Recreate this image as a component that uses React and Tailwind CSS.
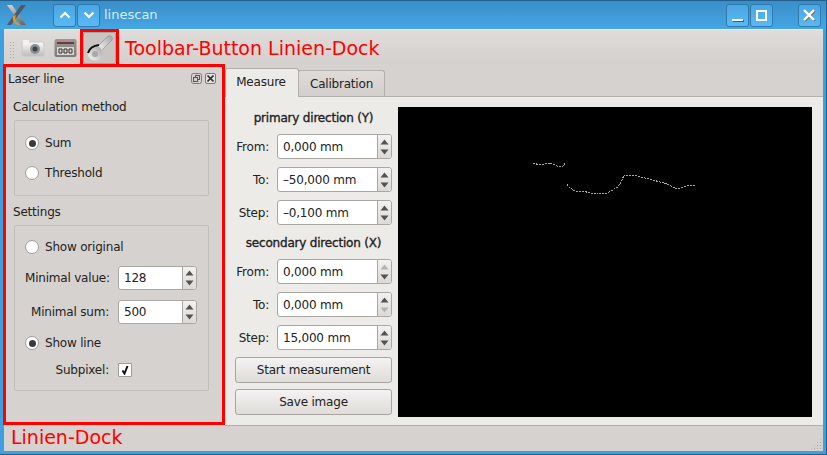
import React from "react";

const Up = ({ dim }) => (
  <svg width="9" height="6" viewBox="0 0 9 6"><path d="M4.5 0.5 L8.5 5.5 H0.5 Z" fill={dim ? "#b5b3b0" : "#55534f"} /></svg>
);
const Down = ({ dim }) => (
  <svg width="9" height="6" viewBox="0 0 9 6"><path d="M4.5 5.5 L8.5 0.5 H0.5 Z" fill={dim ? "#b5b3b0" : "#55534f"} /></svg>
);

function Spin({ value, w = "w-[115px]", h = "h-[25px]", upDim, downDim }) {
  return (
    <div className={`${w} ${h} flex rounded-[3px] border border-[#aaa7a3] bg-white`}>
      <div className="flex-1 pl-[5px] flex items-center text-[12px] text-[#222] whitespace-pre">{value}</div>
      <div className="w-[14px] border-l border-[#aaa7a3] bg-gradient-to-b from-[#f3f2f0] to-[#dcd9d6] rounded-r-[3px] flex flex-col items-center justify-center gap-[4px]">
        <Up dim={upDim} />
        <Down dim={downDim} />
      </div>
    </div>
  );
}

function Radio({ on, label, className = "" }) {
  return (
    <div className={`flex items-center h-[16px] ${className}`}>
      <div className="w-[14px] h-[14px] rounded-full border border-[#a09d99] bg-white flex items-center justify-center">
        {on && <div className="w-[7px] h-[7px] rounded-full bg-[#3a3a3a]" />}
      </div>
      <span className="ml-[6px] text-[12px] text-[#222]">{label}</span>
    </div>
  );
}

function FormRow({ label, value, upDim, downDim, className = "" }) {
  return (
    <div className={`flex items-center ${className}`}>
      <div className="w-[34px] text-right text-[12px] text-[#222] whitespace-nowrap">{label}</div>
      <div className="ml-[8px]"><Spin value={value} upDim={upDim} downDim={downDim} /></div>
    </div>
  );
}

function WinBtn({ children, className = "" }) {
  return (
    <div className={`w-[23px] h-[23px] rounded-[3px] border border-[#2f79ad] bg-gradient-to-b from-[#4aa6e2] to-[#5ab9f5] flex items-center justify-center ${className}`}>
      {children}
    </div>
  );
}

function PushBtn({ children, className = "" }) {
  return (
    <div className={`h-[26px] rounded-[3px] border border-[#a8a5a1] bg-gradient-to-b from-[#f4f3f1] to-[#dfdcd9] flex items-center justify-center text-[12px] text-[#222] ${className}`}>
      {children}
    </div>
  );
}

const line1 = "533,163 540,165 550,163 557,166 563,166 565,163";
const line2 = "567,184 570,188 577,192 583,191 590,193 598,194 607,193 618,187 622,180 624,175 637,176 653,180 667,184 677,189 690,185 695,185";

export default function App() {
  return (
    <div className="w-[827px] h-[455px] overflow-hidden flex flex-col bg-[#3f9fdf] border-t border-r border-[#205f8e] relative tracking-[-0.2px]" style={{ fontFamily: '"DejaVu Sans", sans-serif' }}>
      {/* Title bar */}
      <div className="h-[28px] shrink-0 flex items-center bg-gradient-to-b from-[#3a8ec7] to-[#45a6e4]">
        <svg className="ml-[6px]" width="21" height="21" viewBox="0 0 21 21">
          <defs>
            <linearGradient id="xg" x1="0" y1="0" x2="0" y2="1">
              <stop offset="0" stopColor="#d0d0d0" />
              <stop offset="1" stopColor="#666" />
            </linearGradient>
          </defs>
          <path d="M1 0 H6 L20 20 H15 Z" fill="url(#xg)" />
          <path d="M20 0 H15 L1 20 H5 Z" fill="#4d5a63" />
          <path d="M7 11 A7 7 0 0 0 12 20 L16 20 A7 7 0 0 1 10 10Z" fill="#e09a28" />
        </svg>
        <WinBtn className="ml-[26px]">
          <svg width="12" height="8" viewBox="0 0 12 8"><path d="M1.5 6.5 L6 2 L10.5 6.5" fill="none" stroke="#fff" strokeWidth="2.2" /></svg>
        </WinBtn>
        <WinBtn className="ml-[1px]">
          <svg width="12" height="8" viewBox="0 0 12 8"><path d="M1.5 1.5 L6 6 L10.5 1.5" fill="none" stroke="#fff" strokeWidth="2.2" /></svg>
        </WinBtn>
        <span className="ml-[4px] text-[13px] tracking-normal text-[#d5ebfa]">linescan</span>
        <WinBtn className="ml-auto">
          <div className="w-[11px] h-[2px] bg-white mt-[9px] shadow-[1px_1px_0_#555]" />
        </WinBtn>
        <WinBtn className="ml-[1px]">
          <div className="w-[11px] h-[11px] border-2 border-white" />
        </WinBtn>
        <WinBtn className="ml-[25px] mr-[5px]">
          <svg width="13" height="13" viewBox="0 0 13 13"><path d="M2 2 L12 12 M12 2 L2 12" stroke="#777" strokeWidth="2.4" /><path d="M1 1 L11 11 M11 1 L1 11" stroke="#fff" strokeWidth="2.4" /></svg>
        </WinBtn>
      </div>

      {/* Client area */}
      <div className="ml-[4px] mr-[3px] flex-1 flex flex-col min-h-0 bg-[#d6d2cf] border-t border-[#eeecea]">
        {/* Toolbar */}
        <div className="h-[34px] shrink-0 flex items-start bg-gradient-to-b from-[#e0dcd9] to-[#d4d0cd]">
          <div className="ml-[5px] mt-[11px] w-[5px] h-[17px]" style={{ backgroundImage: "radial-gradient(#aaa6a2 1px, transparent 1px)", backgroundSize: "3px 3px" }} />
          <svg className="ml-[7px] mt-[9px]" width="24" height="18" viewBox="0 0 24 18">
            <defs>
              <linearGradient id="cam" x1="0" y1="0" x2="0" y2="1">
                <stop offset="0" stopColor="#fbfbfb" />
                <stop offset="1" stopColor="#bdbcb9" />
              </linearGradient>
            </defs>
            <rect x="1" y="3" width="22" height="14" rx="2" fill="url(#cam)" stroke="#c9c7c4" />
            <rect x="2" y="1" width="6" height="3" fill="#f2f2f2" />
            <circle cx="14" cy="10" r="5" fill="#8a8f94" />
            <circle cx="14" cy="10" r="2.5" fill="#3d4247" />
          </svg>
          <svg className="ml-[9px] mt-[8px]" width="23" height="20" viewBox="0 0 23 20">
            <defs>
              <linearGradient id="box" x1="0" y1="0" x2="0" y2="1">
                <stop offset="0" stopColor="#9b9895" />
                <stop offset="1" stopColor="#7d7a77" />
              </linearGradient>
            </defs>
            <rect x="0.5" y="1" width="22" height="18" rx="2" fill="url(#box)" />
            <rect x="3" y="4" width="17" height="2" fill="#6e3a3a" />
            <rect x="3" y="9" width="17" height="8" fill="#d7d5d2" />
            <path d="M5 11 h3 v4 h-3z M10 11 h3 v4 h-3z M15 11 h3 v4 h-3z" fill="none" stroke="#333" />
          </svg>
          {/* Highlighted toolbar button */}
          <div className="ml-[3px] -mt-[1px] w-[39px] h-[38px] border-[3px] border-[#ff0000] flex relative z-10">
            <div className="flex-1 rounded-[2px] border border-[#a8a5a1] bg-[#c9c5c2] flex items-center justify-center">
              <svg width="30" height="30" viewBox="0 0 30 30">
                <defs>
                  <linearGradient id="wr" x1="0" y1="1" x2="1" y2="0">
                    <stop offset="0" stopColor="#f7f7f7" />
                    <stop offset="1" stopColor="#a5a5a5" />
                  </linearGradient>
                </defs>
                <path d="M12 14 L23 3 C26 2 28 4 27 7 L16 18 Z" fill="url(#wr)" stroke="#8f8d8a" strokeWidth="0.6" />
                <circle cx="10" cy="20" r="7.5" fill="url(#wr)" />
                <circle cx="10" cy="21" r="3" fill="#a9a9a9" />
                <path d="M3 20 Q5 13 14 12" fill="none" stroke="#111" strokeWidth="2" />
              </svg>
            </div>
          </div>
          <span className="ml-[6px] mt-[5px] text-[19px] leading-[26px] tracking-normal text-[#ff0000] whitespace-nowrap">Toolbar-Button Linien-Dock</span>
        </div>

        {/* Main */}
        <div className="flex-1 flex min-h-0">
          {/* Dock */}
          <div className="-ml-px w-[222px] h-[361px] shrink-0 border-[3px] border-[#ff0000] flex flex-col bg-[#d6d2cf]">
            <div className="h-[23px] shrink-0 flex items-center pl-[2px] text-[12px] text-[#222]">
              Laser line
              <svg className="ml-auto" width="11" height="11" viewBox="0 0 11 11">
                <rect x="0.5" y="0.5" width="10" height="10" rx="2" fill="none" stroke="#7d7a77" />
                <rect x="4.5" y="2.5" width="4" height="4" fill="none" stroke="#55534f" />
                <rect x="2.5" y="4.5" width="4" height="4" fill="#d6d2cf" stroke="#55534f" />
              </svg>
              <div className="ml-[3px] mr-[6px] w-[11px] h-[11px] rounded-[2px] border border-[#7d7a77] bg-[#e6e4e1] flex items-center justify-center">
                <svg width="7" height="7" viewBox="0 0 7 7"><path d="M0.5 0.5 L6.5 6.5 M6.5 0.5 L0.5 6.5" stroke="#333" strokeWidth="1.6" /></svg>
              </div>
            </div>
            <div className="pl-[7px] mt-[8px] h-[18px] flex items-center text-[12px] text-[#222]">Calculation method</div>
            <div className="ml-[8px] mt-[4px] w-[195px] h-[76px] border border-[#c2bfbb] rounded-[2px] pl-[10px] pt-[14px]">
              <Radio on label="Sum" />
              <Radio label="Threshold" className="mt-[14px]" />
            </div>
            <div className="pl-[7px] mt-[7px] h-[18px] flex items-center text-[12px] text-[#222]">Settings</div>
            <div className="ml-[8px] mt-[4px] w-[195px] h-[166px] border border-[#c2bfbb] rounded-[2px] pl-[10px] pt-[13px]">
              <Radio label="Show original" />
              <div className="flex items-center mt-[11px]">
                <div className="w-[84px] text-right text-[12px] text-[#222] whitespace-nowrap">Minimal value:</div>
                <div className="ml-[9px]"><Spin value="128" w="w-[79px]" h="h-[24px]" /></div>
              </div>
              <div className="flex items-center mt-[10px]">
                <div className="w-[84px] text-right text-[12px] text-[#222] whitespace-nowrap">Minimal sum:</div>
                <div className="ml-[9px]"><Spin value="500" w="w-[79px]" h="h-[24px]" /></div>
              </div>
              <Radio on label="Show line" className="mt-[11px]" />
              <div className="flex items-center mt-[10px]">
                <div className="w-[84px] text-right text-[12px] text-[#222] whitespace-nowrap">Subpixel:</div>
                <div className="ml-[9px] w-[14px] h-[14px] border border-[#a09d99] rounded-[1px] bg-white flex items-center justify-center">
                  <svg width="8" height="10" viewBox="0 0 8 10"><path d="M1.5 5.5 L3.5 8.5 L6.5 1" fill="none" stroke="#111" strokeWidth="2" /></svg>
                </div>
              </div>
            </div>
          </div>

          {/* Right side */}
          <div className="flex-1 flex flex-col pt-[4px] min-w-0">
            <div className="h-[28px] shrink-0 flex items-end relative z-10">
              <div className="w-[74px] h-[29px] -mb-px rounded-t-[3px] border border-b-0 border-[#b3b0ac] bg-[#edebe8] flex items-center justify-center text-[12px] text-[#222] pb-[2px] pr-[2px]">Measure</div>
              <div className="w-[87px] h-[26px] -ml-px rounded-t-[3px] border border-b-0 border-[#b3b0ac] bg-gradient-to-b from-[#dedbd8] to-[#d3cfcc] flex items-center justify-center text-[12px] text-[#222]">Calibration</div>
            </div>
            <div className="h-[330px] shrink-0 bg-[#edebe8] border-t border-b border-[#b3b0ac] flex">
              <div className="ml-[10px] w-[157px] shrink-0 flex flex-col">
                <div className="mt-[12px] h-[18px] flex items-center justify-center text-[12px] [-webkit-text-stroke:0.35px_#222] text-[#222] whitespace-nowrap">primary direction (Y)</div>
                <FormRow label="From:" value="0,000 mm" className="mt-[7px]" />
                <FormRow label="To:" value="–50,000 mm" className="mt-[8px]" />
                <FormRow label="Step:" value="–0,100 mm" className="mt-[8px]" />
                <div className="mt-[9px] h-[18px] flex items-center justify-center text-[12px] [-webkit-text-stroke:0.35px_#222] text-[#222] whitespace-nowrap">secondary direction (X)</div>
                <FormRow label="From:" value="0,000 mm" upDim className="mt-[7px]" />
                <FormRow label="To:" value="0,000 mm" downDim className="mt-[8px]" />
                <FormRow label="Step:" value="15,000 mm" className="mt-[8px]" />
                <PushBtn className="mt-[7px]">Start measurement</PushBtn>
                <PushBtn className="mt-[6px]">Save image</PushBtn>
              </div>
              <div className="ml-[6px] mt-[10px] w-[414px] h-[310px] bg-black">
                <svg width="414" height="310" viewBox="398 107 414 310" shapeRendering="crispEdges">
                  <polyline points={line1} fill="none" stroke="#a8a8a8" strokeWidth="1" strokeDasharray="2 1" />
                  <polyline points={line2} fill="none" stroke="#a8a8a8" strokeWidth="1" strokeDasharray="2 1" />
                </svg>
              </div>
            </div>
          </div>
        </div>

        {/* Status bar */}
        <div className="h-[25px] shrink-0 flex items-center relative pb-[4px]">
          <span className="ml-[7px] text-[19px] leading-[24px] tracking-normal text-[#ff0000] whitespace-nowrap">Linien-Dock</span>
          <div className="absolute right-[1px] bottom-[1px] w-[12px] h-[12px]" style={{ backgroundImage: "radial-gradient(#aaa6a2 1px, transparent 1px)", backgroundSize: "3px 3px", clipPath: "polygon(100% 0, 100% 100%, 0 100%)" }} />
        </div>
      </div>
      <div className="h-[4px] shrink-0 bg-[#3f9fdf] border-b border-[#205f8e]" />
    </div>
  );
}
